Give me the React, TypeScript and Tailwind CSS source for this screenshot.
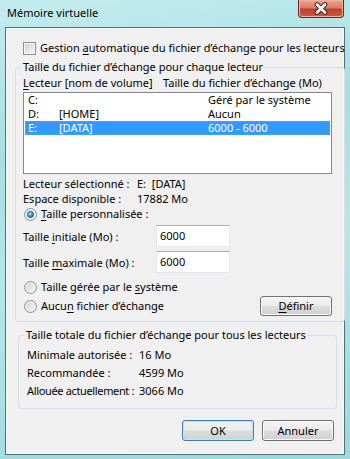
import type { ReactNode } from "react";

function U({ children }: { children: ReactNode }) {
  return <span className="underline underline-offset-[2px] decoration-1">{children}</span>;
}

function Radio({ checked }: { checked?: boolean }) {
  return (
    <span className="flex h-[13px] w-[13px] shrink-0 items-center justify-center rounded-full border border-[#8e8f8f] bg-[linear-gradient(135deg,#d4d4d4,#f6f6f6)] shadow-[inset_0_0_0_1px_#f2f2f2]">
      {checked && (
        <span className="h-[7px] w-[7px] rounded-full border border-[#1b5a92] bg-[radial-gradient(circle_at_35%_35%,#b6ecff,#2f93dc_55%,#0f5a9c)]" />
      )}
    </span>
  );
}

function Btn({ children, primary }: { children: ReactNode; primary?: boolean }) {
  return (
    <button
      className={`flex h-[21px] w-[72px] items-center justify-center rounded-[3px] border text-[11px] leading-[14px] text-black bg-[linear-gradient(#f3f3f3_0%,#ebebeb_48%,#dddddd_52%,#cfcfcf_100%)] ${
        primary
          ? "border-[#3c7fb1] shadow-[inset_0_0_0_1px_#bfe4f8]"
          : "border-[#707070] shadow-[inset_0_0_0_1px_#fbfbfb]"
      }`}
    >
      {children}
    </button>
  );
}

function Field({ value }: { value: string }) {
  return (
    <div className="flex h-[22px] w-[74px] items-center border border-[#e3e9ef] border-t-[#abadb3] bg-white pl-[3px]">
      {value}
    </div>
  );
}

const rows = [
  { d: "C:", n: "", s: "Géré par le système" },
  { d: "D:", n: "[HOME]", s: "Aucun" },
  { d: "E:", n: "[DATA]", s: "6000 - 6000", sel: true },
];

export default function App() {
  return (
    <div className="h-[459px] w-[350px] overflow-hidden whitespace-nowrap bg-[linear-gradient(170deg,#c4ecee_0%,#a6dfe3_30%,#b5e7ea_55%,#9bd9de_100%)] font-['Noto_Sans',sans-serif] text-[11px] leading-[14px] text-black">
      {/* title bar */}
      <div className="flex h-[27px] items-start justify-between">
        <div className="pl-[7px] pt-[6px] leading-[14px] text-black">Mémoire virtuelle</div>
        <div className="mr-[6px] flex h-[18px] w-[46px] items-center justify-center rounded-b-[4px] border border-t-0 border-[#5a2c27] bg-[linear-gradient(#eaa594_0%,#d97d68_45%,#c0412a_55%,#cf5c42_100%)] shadow-[inset_0_0_0_1px_#f0b0a0]">
          <svg width="18" height="13" viewBox="0 0 18 13">
            <path d="M5 2.5 L13 10.5 M13 2.5 L5 10.5" stroke="#3f2a2e" strokeWidth="4.6" strokeLinecap="round" />
            <path d="M5 2.5 L13 10.5 M13 2.5 L5 10.5" stroke="#ffffff" strokeWidth="2.6" strokeLinecap="round" />
          </svg>
        </div>
      </div>

      {/* client */}
      <div className="mx-[5px] h-[428px] border border-[#4f7377]">
        <div className="h-full border border-[#f7f9f9] bg-[#f0f0f0]">
          <div className="ml-[16px] mt-[12px] flex h-[14px] items-center gap-[4px]">
            <span className="h-[13px] w-[13px] shrink-0 border border-[#8e8f8f] bg-[linear-gradient(135deg,#d2d2d2,#f7f7f7)] shadow-[inset_0_0_0_1px_#f4f4f4]" />
            <span>
              Gestion <U>a</U>utomatique du fichier d’échange pour les lecteurs
            </span>
          </div>

          {/* group 1 */}
          <fieldset className="ml-[8px] mt-[5px] w-[322px] rounded-[3px] border border-[#d5dfe5] pb-[5px] pl-[7px] pr-[12px]">
            <legend className="-ml-[1px] px-[1px] leading-[14px]">Taille du fichier d’échange pour chaque lecteur</legend>
            <div className="mt-[2px] flex h-[14px] items-center">
              <span className="w-[140px]">
                <U>L</U>ecteur [nom de volume]
              </span>
              <span>Taille du fichier d’échange (Mo)</span>
            </div>
            <div className="mt-[2px] h-[82px] w-[309px] border border-[#828790] bg-white">
              {rows.map((r) => (
                <div
                  key={r.d}
                  className={`mx-px flex h-[14px] items-center pl-[2px] leading-[12px] ${
                    r.sel ? "border border-dotted border-[#d98d3a] bg-[#3399ff] text-white" : "border border-transparent"
                  }`}
                >
                  <span className="w-[31px]">{r.d}</span>
                  <span className="w-[149px]">{r.n}</span>
                  <span>{r.s}</span>
                </div>
              ))}
            </div>
            <div className="mt-[2px] flex h-[15px] items-center">
              <span className="w-[114px]">Lecteur sélectionné :</span>
              <span>E:&nbsp;&nbsp;[DATA]</span>
            </div>
            <div className="flex h-[15px] items-center">
              <span className="w-[114px]">Espace disponible :</span>
              <span>17882 Mo</span>
            </div>
            <div className="mt-px flex h-[14px] items-center gap-[4px] pl-px">
              <Radio checked />
              <span>
                <U>T</U>aille personnalisée :
              </span>
            </div>
            <div className="mt-[4px] flex h-[22px] items-center">
              <span className="w-[133px] pt-[2px]">
                Taille <U>i</U>nitiale (Mo) :
              </span>
              <Field value="6000" />
            </div>
            <div className="mt-[4px] flex h-[22px] items-center">
              <span className="w-[133px] pt-[2px]">
                Taille <U>m</U>aximale (Mo) :
              </span>
              <Field value="6000" />
            </div>
            <div className="mt-[7px] flex h-[14px] items-center gap-[4px] pl-px">
              <Radio />
              <span>
                Taille gérée par le <U>s</U>ystème
              </span>
            </div>
            <div className="mt-[2px] flex h-[20px] items-center justify-between pl-px">
              <div className="flex items-center gap-[4px]">
                <Radio />
                <span>
                  Aucu<U>n</U> fichier d’échange
                </span>
              </div>
              <button className="flex h-[20px] w-[72px] items-center justify-center rounded-[3px] border border-[#707070] bg-[linear-gradient(#f3f3f3_0%,#ebebeb_48%,#dddddd_52%,#cfcfcf_100%)] shadow-[inset_0_0_0_1px_#fbfbfb] text-[11px] leading-[14px]">
                <U>D</U>éfinir
              </button>
            </div>
          </fieldset>

          {/* group 2 */}
          <fieldset className="ml-[11px] mt-[6px] w-[319px] rounded-[3px] border border-[#d5dfe5] pb-[8px] pl-[8px] pt-[4px]">
            <legend className="-ml-[2px] px-[1px] leading-[14px]">Taille totale du fichier d’échange pour tous les lecteurs</legend>
            <div className="flex h-[18px] items-center">
              <span className="w-[112px]">Minimale autorisée :</span>
              <span>16 Mo</span>
            </div>
            <div className="flex h-[18px] items-center">
              <span className="w-[112px]">Recommandée :</span>
              <span>4599 Mo</span>
            </div>
            <div className="flex h-[18px] items-center">
              <span className="w-[112px] tracking-[-0.35px]">Allouée actuellement :</span>
              <span>3066 Mo</span>
            </div>
          </fieldset>

          <div className="mt-[11px] flex justify-end gap-[8px] pr-[9px]">
            <Btn primary>OK</Btn>
            <Btn>Annuler</Btn>
          </div>
        </div>
      </div>
    </div>
  );
}
